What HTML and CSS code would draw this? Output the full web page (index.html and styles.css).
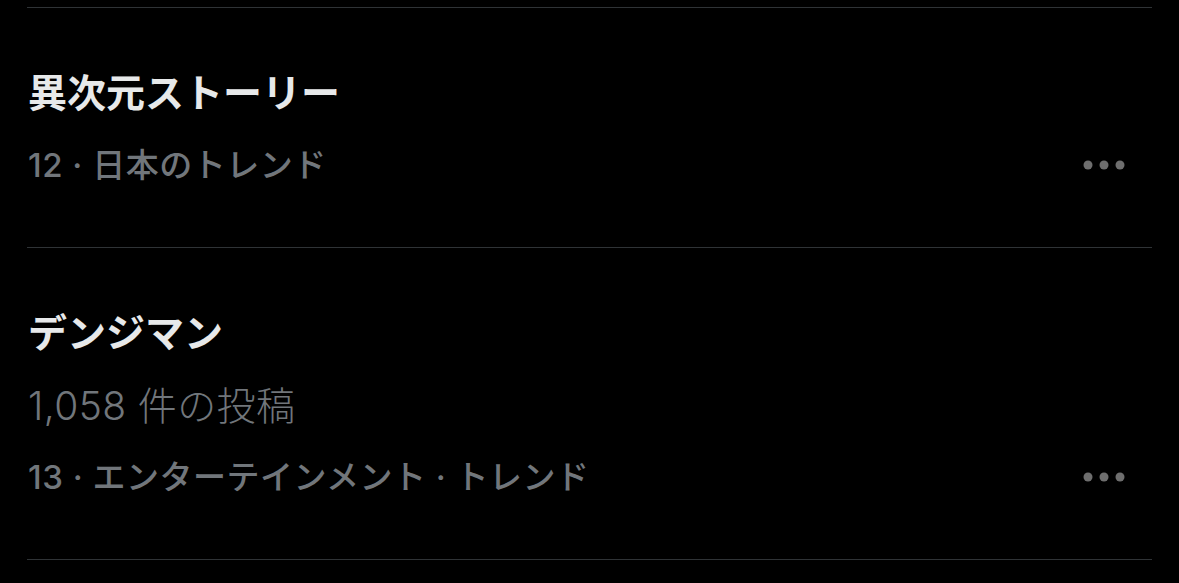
FILE: index.html
```html
<!DOCTYPE html>
<html lang="ja">
  <head>
    <meta charset="UTF-8" />
    <meta name="viewport" content="width=device-width, initial-scale=1.0" />
    <title>トレンド</title>
    <link rel="stylesheet" href="styles.css">
  </head>
  <body>
    <div class="trends">
      <div class="trend">
        <div class="trend-body">
          <div class="trend-title">異次元ストーリー</div>
          <div class="trend-meta">12 · 日本のトレンド</div>
        </div>
        <button class="more" aria-label="もっと見る">
          <svg width="44" height="10" viewBox="0 0 44 10">
            <circle cx="6" cy="5" r="4.5" />
            <circle cx="22" cy="5" r="4.5" />
            <circle cx="38" cy="5" r="4.5" />
          </svg>
        </button>
      </div>
      <div class="trend">
        <div class="trend-body">
          <div class="trend-title">デンジマン</div>
          <div class="trend-count">1,058 件の投稿</div>
          <div class="trend-meta">13 · エンターテインメント · トレンド</div>
        </div>
        <button class="more" aria-label="もっと見る">
          <svg width="44" height="10" viewBox="0 0 44 10">
            <circle cx="6" cy="5" r="4.5" />
            <circle cx="22" cy="5" r="4.5" />
            <circle cx="38" cy="5" r="4.5" />
          </svg>
        </button>
      </div>
    </div>
  </body>
</html>
```

FILE: styles.css
```css
body {
  margin: 0;
  background-color: #000;
  font-family: Inter, "Noto Sans CJK JP", sans-serif;
}

.trends {
  margin: 0 27px;
  padding-top: 7px;
}

.trend {
  display: flex;
  border-top: 1px solid #2f3336;
  padding: 61px 0 59px 1px;
}

.trend:last-child {
  border-bottom: 1px solid #2f3336;
}

.trend-body {
  flex: 1;
}

.trend-title {
  color: #e7e9ea;
  font-size: 39px;
  font-weight: 700;
  line-height: 48px;
}

.trend-count {
  color: #71767b;
  font-size: 39px;
  font-weight: 300;
  letter-spacing: 0.4px;
  line-height: 46px;
  margin-top: 26px;
}

.trend-meta {
  color: #71767b;
  font-size: 33px;
  font-weight: 500;
  letter-spacing: 0.5px;
  line-height: 46px;
  margin-top: 25px;
}

.more {
  align-self: flex-end;
  background: none;
  border: none;
  padding: 0;
  margin: 0 26px 18px 0;
  fill: #6e6e6e;
}

.more svg {
  display: block;
}
```
